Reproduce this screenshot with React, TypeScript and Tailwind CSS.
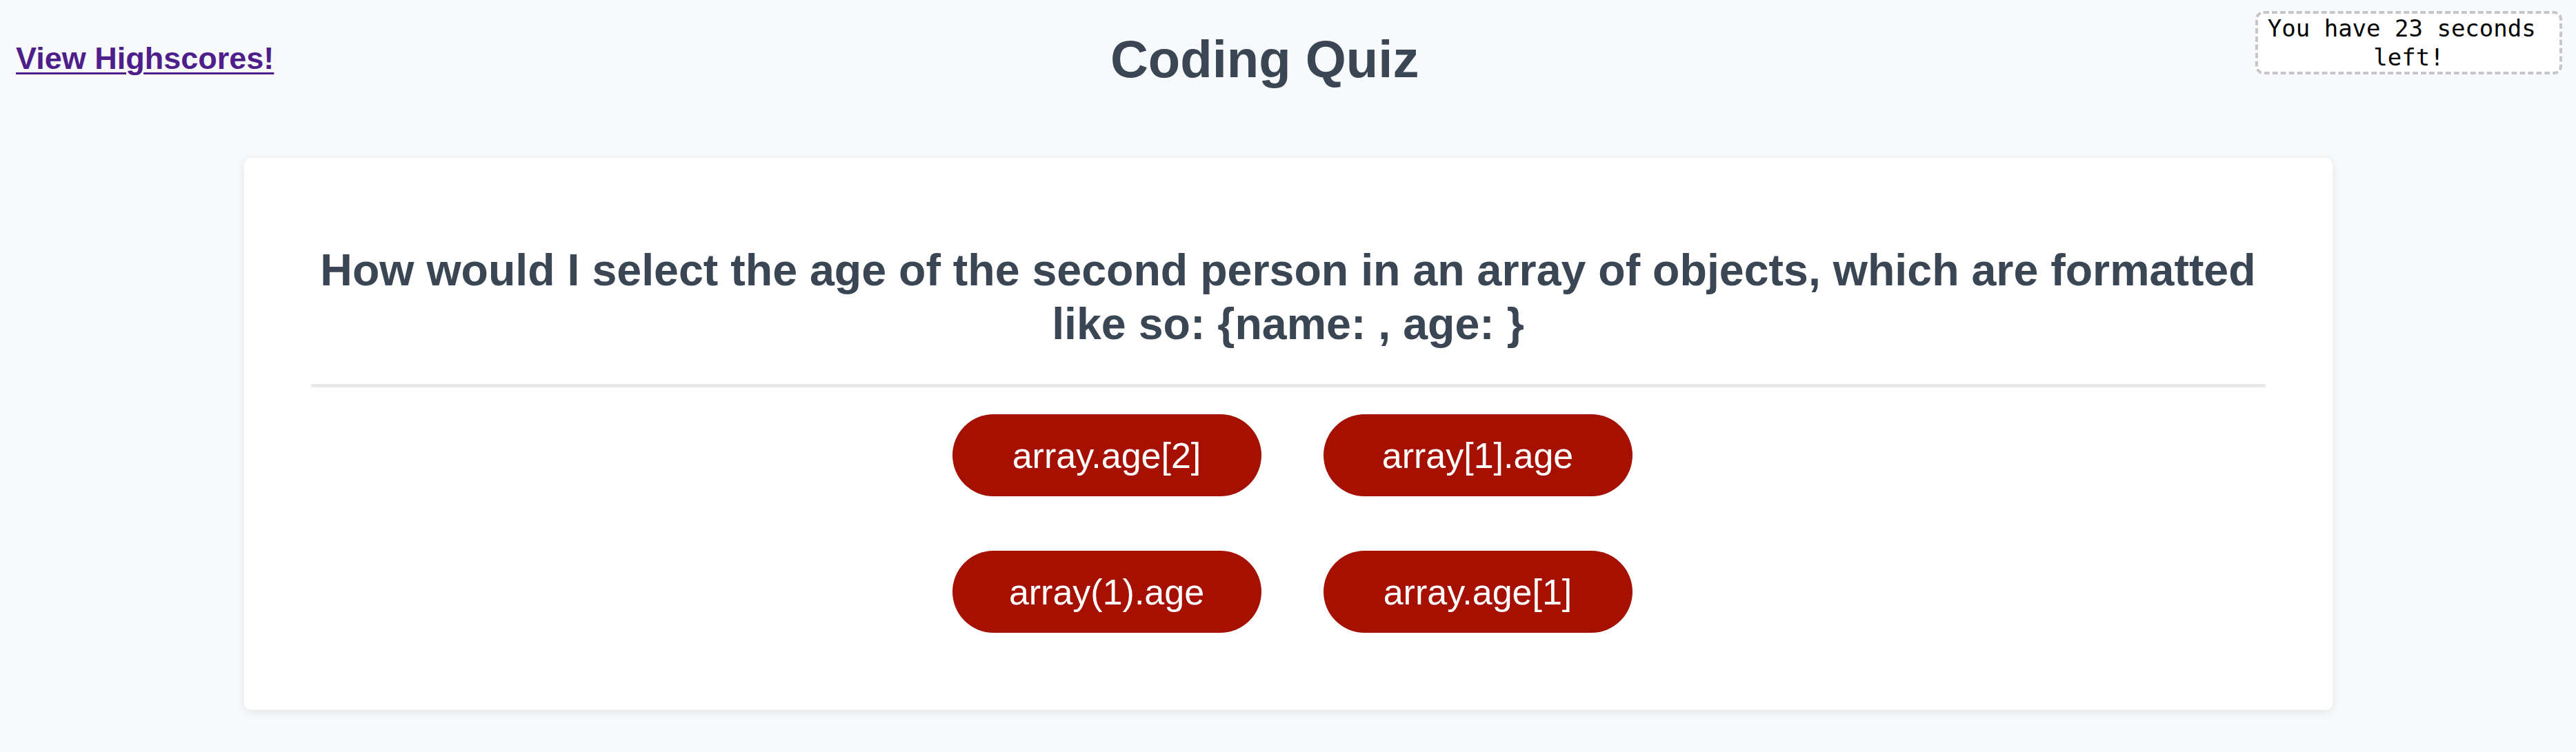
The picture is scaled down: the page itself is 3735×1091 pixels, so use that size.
const answers = ["array.age[2]", "array[1].age", "array(1).age", "array.age[1]"]

function App() {
  return (
    <div className="min-h-screen bg-[#f8f9fb] font-['Liberation_Sans',Arial,sans-serif]">
      <header className="flex justify-between items-start pl-[23px] pr-[20px]">
        <a
          href="#"
          className="mt-[59px] text-[45px] leading-[52px] font-bold text-[#4e1f8b] underline decoration-[3px] underline-offset-[5px]"
        >
          View Highscores!
        </a>
        <h1 className="mt-[42px] text-[76px] leading-[88px] font-bold text-[#3a4654]">
          Coding Quiz
        </h1>
        <div className="mt-[16px] w-[445px] bg-white border-[4px] border-dashed border-[#c4c6ca] rounded-[12px] text-center font-['DejaVu_Sans_Mono',monospace] text-[34px] leading-[42px] text-black">
          You have 23 seconds{"\u00a0"}
          <br />
          left!
        </div>
      </header>

      <main className="mt-[99px] mx-auto w-[3028px] bg-white rounded-[10px] shadow-[0_3px_14px_rgba(0,0,0,0.09)] px-[97px] pt-[124px] pb-[112px]">
        <h2 className="text-center text-[64.5px] leading-[78px] font-bold text-[#3a4654]">
          How would I select the age of the second person in an array of objects, which are formatted like so: {"{name: , age: }"}
        </h2>
        <hr className="mt-[48px] border-0 h-[5px] bg-[#e8e8e8]" />
        <div className="mt-[39px] flex justify-center pl-[12px]">
          <div className="grid grid-cols-2 gap-x-[90px] gap-y-[79px]">
            {answers.map((a) => (
              <button
                key={a}
                className="w-[448px] h-[119px] rounded-full bg-[#a61000] text-white text-[52px] leading-[60px] flex items-center justify-center"
              >
                {a}
              </button>
            ))}
          </div>
        </div>
      </main>
    </div>
  )
}

export default App
